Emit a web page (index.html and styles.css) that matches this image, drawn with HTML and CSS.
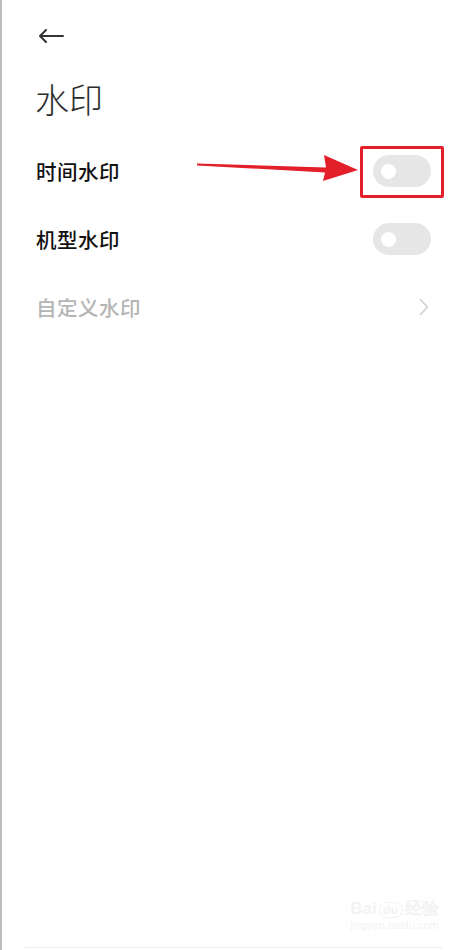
FILE: index.html
```html
<!DOCTYPE html>
<html lang="zh">
<head>
<meta charset="utf-8">
<link rel="stylesheet" href="styles.css">
</head>
<body>
<div class="page">
  <div class="topbar">
    <svg class="back" width="26" height="14" viewBox="0 0 26 14">
      <path d="M25 7H2M8 1L2 7l6 6" fill="none" stroke="#333" stroke-width="2" stroke-linecap="round" stroke-linejoin="round"/>
    </svg>
  </div>
  <h1 class="title">水印</h1>
  <ul class="list">
    <li class="row">
      <span class="label">时间水印</span>
      <span class="toggle"><span class="knob"></span></span>
    </li>
    <li class="row">
      <span class="label">机型水印</span>
      <span class="toggle"><span class="knob"></span></span>
    </li>
    <li class="row disabled">
      <span class="label">自定义水印</span>
      <svg class="chev" width="10" height="18" viewBox="0 0 10 18">
        <path d="M1.5 1.5L8.5 9l-7 7.5" fill="none" stroke="#d0d0d0" stroke-width="1.6" stroke-linecap="round" stroke-linejoin="round"/>
      </svg>
    </li>
  </ul>
  <div class="bottomline"></div>

  <div class="highlight"></div>
  <svg class="pointer" width="170" height="40" viewBox="0 0 170 40">
    <path d="M5 13.5 L134 17.5 L132 5 L166 20 L131 31 L133 22.5 L5 15.5 Z" fill="#e3202a"/>
  </svg>

  <div class="wm">
    <div class="wm-logo">Bai<span class="wm-du">du</span>经验</div>
    <div class="wm-url">jingyan.baidu.com</div>
  </div>
</div>
</body>
</html>
```
FILE: styles.css
```css
html, body {
  margin: 0;
  padding: 0;
  background: #fff;
}
body {
  font-family: "Noto Sans CJK SC", "Noto Sans", sans-serif;
}
.page {
  position: relative;
  width: 463px;
  height: 950px;
  border-left: 2px solid #bdbdbd;
  overflow: hidden;
}
.topbar {
  padding: 29px 0 0 36px;
  height: 16px;
}
.back {
  display: block;
}
.title {
  margin: 34px 0 0 33px;
  font-size: 34px;
  font-weight: 300;
  line-height: 40px;
  color: #2b2b2b;
  letter-spacing: 0;
}
.list {
  list-style: none;
  margin: 18px 0 0 0;
  padding: 0;
}
.row {
  display: flex;
  align-items: center;
  justify-content: space-between;
  height: 68px;
  padding: 0 34px 0 34px;
}
.label {
  font-size: 20.5px;
  font-weight: 500;
  color: #111;
  letter-spacing: 0.5px;
}
.disabled .label {
  color: #b5b5b5;
  font-weight: 500;
}
.toggle {
  display: flex;
  align-items: center;
  width: 58px;
  height: 32px;
  border-radius: 16px;
  background: #e6e6e6;
  box-sizing: border-box;
  padding-left: 8px;
}
.knob {
  width: 15px;
  height: 15px;
  border-radius: 50%;
  background: #fff;
}
.chev {
  display: block;
  margin-right: 2px;
}
.bottomline {
  position: absolute;
  left: 23px;
  right: 23px;
  bottom: 2px;
  height: 1px;
  background: #ececec;
}
.highlight {
  position: absolute;
  left: 358px;
  top: 146px;
  width: 78px;
  height: 46px;
  border: 3.5px solid #e3202a;
  border-radius: 2px;
}
.pointer {
  position: absolute;
  left: 190px;
  top: 150px;
}
.wm {
  position: absolute;
  left: 348px;
  top: 900px;
  color: #f3f3f3;
  text-align: center;
}
.wm-logo {
  font-family: "Liberation Sans", sans-serif;
  font-size: 17px;
  font-weight: 700;
  line-height: 18px;
}
.wm-du {
  display: inline-block;
  border: 1px solid #f3f3f3;
  border-radius: 8px;
  padding: 0 3px;
  margin: 0 2px;
  font-size: 13px;
  line-height: 14px;
}
.wm-url {
  font-family: "Liberation Sans", sans-serif;
  font-size: 11px;
  line-height: 14px;
}
```
